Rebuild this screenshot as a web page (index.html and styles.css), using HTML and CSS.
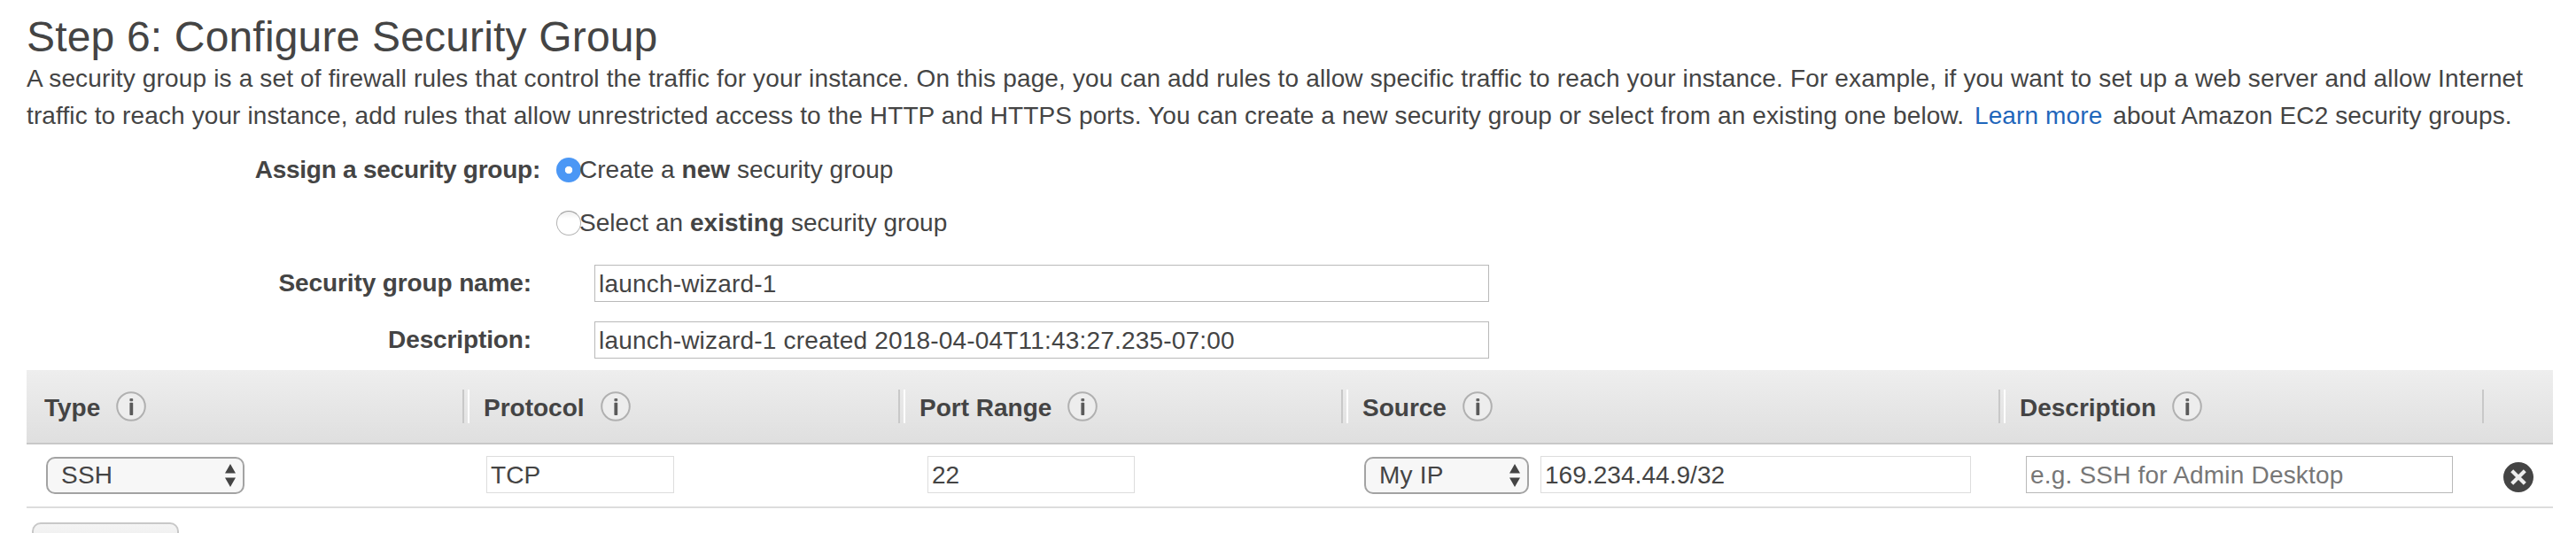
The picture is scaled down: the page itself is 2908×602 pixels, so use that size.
FILE: index.html
```html
<!DOCTYPE html>
<html lang="en">
<head>
<meta charset="utf-8">
<title>Configure Security Group</title>
<link rel="stylesheet" href="styles.css">
</head>
<body>
<svg class="defs" width="0" height="0">
  <symbol id="info" viewBox="0 0 34 34">
    <circle cx="17" cy="17" r="15.8" fill="#ededed" stroke="#b0b0b0" stroke-width="2"/>
    <rect x="15.4" y="8" width="3.8" height="3.2" rx="1" fill="#666"/>
    <rect x="15.4" y="12.8" width="3.8" height="14.2" rx="0.8" fill="#5a5a5a"/>
  </symbol>
  <symbol id="arrows" viewBox="0 0 12 26">
    <path d="M6 0 L12 10.5 H0 Z M0 15.5 H12 L6 26 Z" fill="#444"/>
  </symbol>
</svg>
<main class="page">
  <h1 class="title">Step 6: Configure Security Group</h1>
  <p class="intro"><span class="line-a">A security group is a set of firewall rules that control the traffic for your instance. On this page, you can add rules to allow specific traffic to reach your instance. For example, if you want to set up a web server and allow Internet</span><br><span class="line-b">traffic to reach your instance, add rules that allow unrestricted access to the HTTP and HTTPS ports. You can create a new security group or select from an existing one below. <a class="link">Learn more</a> about Amazon EC2 security groups.</span></p>

  <section class="form">
    <div class="row assign">
      <div class="label wide">Assign a security group:</div>
      <label class="choice"><i class="radio on"></i><span>Create a <b>new</b> security group</span></label>
    </div>
    <div class="row assign">
      <div class="label wide"></div>
      <label class="choice"><i class="radio"></i><span>Select an <b>existing</b> security group</span></label>
    </div>
    <div class="row field">
      <div class="label">Security group name:</div>
      <input class="input" value="launch-wizard-1">
    </div>
    <div class="row field">
      <div class="label">Description:</div>
      <input class="input" value="launch-wizard-1 created 2018-04-04T11:43:27.235-07:00">
    </div>
  </section>

  <section class="table">
    <div class="grid head">
      <div class="th"><span>Type</span><svg class="info"><use href="#info"/></svg></div>
      <div class="th"><span>Protocol</span><svg class="info"><use href="#info"/></svg></div>
      <div class="th"><span>Port Range</span><svg class="info"><use href="#info"/></svg></div>
      <div class="th"><span>Source</span><svg class="info"><use href="#info"/></svg></div>
      <div class="th"><span>Description</span><svg class="info"><use href="#info"/></svg></div>
      <div class="th last"></div>
    </div>
    <div class="grid body">
      <div class="td type"><div class="select"><span>SSH</span><svg class="arrows"><use href="#arrows"/></svg></div></div>
      <div class="td protocol"><input class="input pale" value="TCP"></div>
      <div class="td port"><input class="input pale" value="22"></div>
      <div class="td source"><div class="select"><span>My IP</span><svg class="arrows"><use href="#arrows"/></svg></div><input class="input pale" value="169.234.44.9/32"></div>
      <div class="td desc"><input class="input" placeholder="e.g. SSH for Admin Desktop"></div>
      <div class="td remove"><svg class="close" viewBox="0 0 34 34"><circle cx="17" cy="17" r="17" fill="#444"/><path d="M9.7 9.7 L24.3 24.3 M24.3 9.7 L9.7 24.3" stroke="#eee" stroke-width="4.2"/></svg></div>
    </div>
  </section>
  <div class="add"></div>
</main>
</body>
</html>
```
FILE: styles.css
```css
* { box-sizing: border-box; }
html, body { margin: 0; height: 602px; overflow: hidden; background: #fff; }
body, input { font-family: "Liberation Sans", Arial, sans-serif; font-size: 28px; color: #444; }
.defs { display: block; height: 0; }
.page { width: 2908px; height: 602px; padding: 14px 26px 0 30px; overflow: hidden; }
.title { margin: 0; height: 54px; font-size: 48px; font-weight: 400; line-height: 55px; letter-spacing: 0.17px; white-space: nowrap; }
.intro { margin: 0; height: 94px; line-height: 42px; white-space: nowrap; }
.line-a { letter-spacing: 0.155px; }
.line-b { letter-spacing: 0.115px; }
.link { color: #1f66bb; padding: 0 4px; }

.form { height: 256px; }
.row { display: flex; align-items: center; }
.assign { height: 60px; }
.field { height: 64px; }
.assign + .field { margin-top: 6px; }
.label { width: 571px; padding-right: 1px; margin-right: 70px; text-align: right; font-weight: 700; letter-spacing: -0.12px; white-space: nowrap; }
.label.wide { width: 580px; margin-right: 18px; padding-right: 0; letter-spacing: -0.25px; }
.choice { display: flex; align-items: center; white-space: nowrap; letter-spacing: 0.04px; }
.radio { width: 28px; height: 28px; margin-right: -2px; border-radius: 50%; border: 1px solid #b4b4b4; border-top-color: #999; background: linear-gradient(#eee, #fff 30%); }
.radio.on { border: 0; background: radial-gradient(circle, #fff 3.8px, #4b97f5 4.6px); }
.input { width: 1010px; height: 42px; padding: 1px 4px 0; border: 1px solid #b9b9b9; border-radius: 0; background: #fff; outline: 0; letter-spacing: 0.19px; }
.input::placeholder { color: #777; opacity: 1; }
.input.pale { border-color: #ddd; letter-spacing: 0.05px; }

.table { width: 2852px; }
.grid { display: grid; grid-template-columns: 492px 492px 500px 742px 546px 80px; }
.head { height: 84px; background: linear-gradient(#eee, #dfdfdf); border-bottom: 2px solid #c8c8c8; }
.th { display: flex; align-items: center; height: 82px; padding-left: 20px; font-weight: 700; }
.th span { padding-top: 3px; }
.th + .th::before { content: ""; width: 4px; height: 38px; margin-right: 16px; margin-left: -20px; border-left: 2px solid #c8c8c8; border-right: 2px solid #fff; }
.th.last::before { border-right: 0; }
.info { width: 34px; height: 34px; margin-left: 18px; }
.body { height: 72px; border-bottom: 2px solid #ddd; }
.td { display: flex; align-items: center; height: 70px; }
.td .input { margin-bottom: 2px; padding-top: 2px; }
.select { display: flex; align-items: center; justify-content: space-between; height: 42px; padding: 0 8px 0 15px; border: 2px solid #a3a3a3; border-radius: 10px; background: #f7f7f7; letter-spacing: 0.2px; }
.arrows { width: 12px; height: 26px; }
.type { padding-left: 22px; }
.type .select { width: 224px; }
.protocol { padding-left: 27px; }
.protocol .input { width: 212px; }
.port { padding-left: 33px; }
.port .input { width: 234px; }
.source { padding-left: 26px; gap: 13px; }
.source .select { width: 186px; }
.source .input { width: 486px; }
.desc { padding-left: 31px; }
.desc .input { width: 482px; }
.remove { padding: 4px 0 0 24px; }
.close { width: 34px; height: 34px; }
.add { width: 166px; height: 60px; margin: 16px 0 0 6px; border: 2px solid #c8c8c8; border-radius: 10px; background: linear-gradient(#f4f4f4, #e4e4e4); }
```
